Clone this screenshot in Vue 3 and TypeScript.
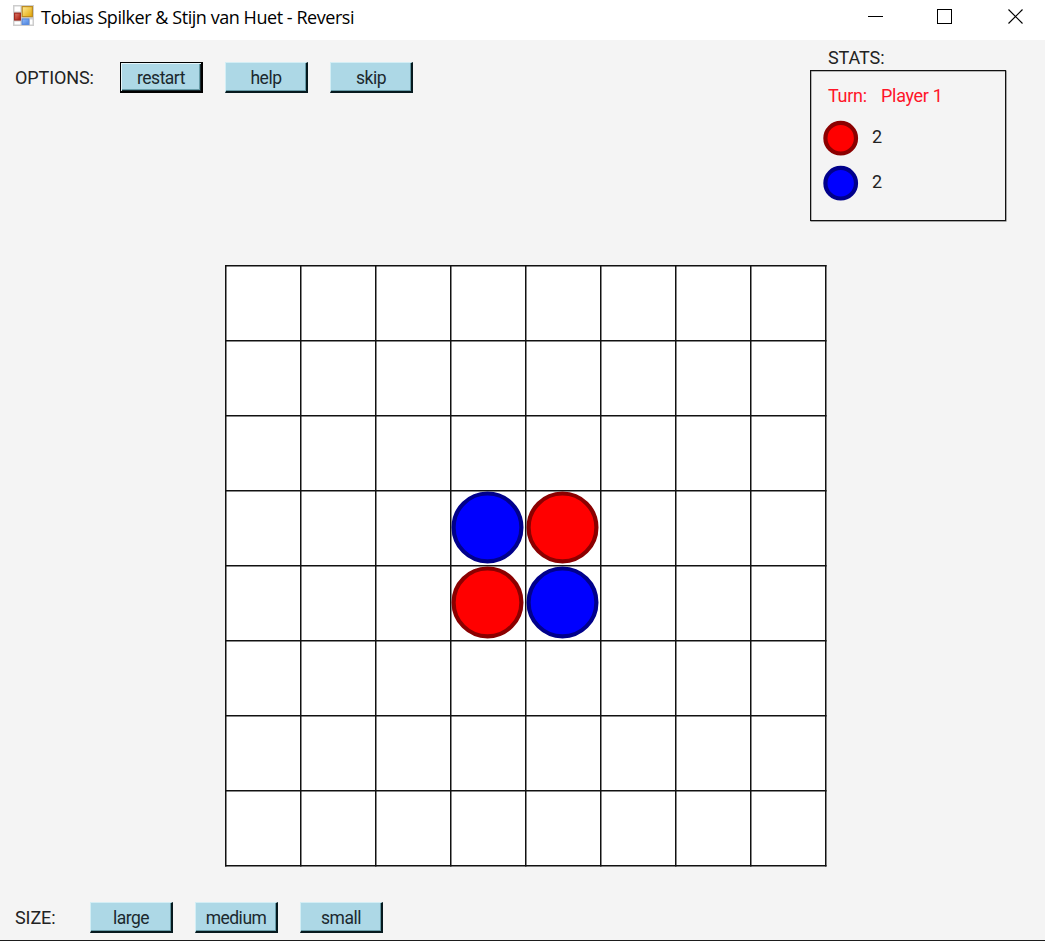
<script setup lang="ts">
import { ref } from 'vue'

type Player = 'red' | 'blue'
interface Disc { col: number; row: number; player: Player }

const CELL = 75
const size = ref(8)
const discs = ref<Disc[]>([
  { col: 3, row: 3, player: 'blue' },
  { col: 4, row: 3, player: 'red' },
  { col: 3, row: 4, player: 'red' },
  { col: 4, row: 4, player: 'blue' },
])
const players: Player[] = ['red', 'blue']
const count = (p: Player) => discs.value.filter(d => d.player === p).length
const options = ['restart', 'help', 'skip']
const sizes = ['large', 'medium', 'small']
</script>

<template>
  <div class="window">
    <header class="titlebar">
      <svg class="app-icon" width="21" height="21" viewBox="0 0 21 21">
        <defs>
          <linearGradient id="gold" x1="0" y1="0" x2="1" y2="1"><stop offset="0" stop-color="#ffec9a" /><stop offset="1" stop-color="#e2a400" /></linearGradient>
          <linearGradient id="ruby" x1="0" y1="0" x2="1" y2="1"><stop offset="0" stop-color="#e08070" /><stop offset="1" stop-color="#a81408" /></linearGradient>
          <linearGradient id="azure" x1="0" y1="0" x2="1" y2="1"><stop offset="0" stop-color="#91bbfa" /><stop offset="1" stop-color="#4c83df" /></linearGradient>
        </defs>
        <rect width="21" height="21" fill="#cdcdcd" />
        <rect x="1.5" y="1.5" width="6" height="5" fill="#fff" />
        <rect x="1.5" y="16.5" width="6" height="3" fill="#fff" />
        <rect x="17" y="14.5" width="2.5" height="5" fill="#fff" />
        <rect x="9.2" y="1.6" width="10.2" height="10" fill="url(#gold)" stroke="#bd8b20" stroke-width="1.2" />
        <rect x="1.6" y="8.2" width="5.8" height="6.8" fill="url(#ruby)" stroke="#a12a20" stroke-width="1.2" />
        <rect x="9.2" y="14" width="6.6" height="5.4" fill="url(#azure)" stroke="#5c8cdd" stroke-width="1.2" />
      </svg>
      <span class="title">Tobias Spilker &amp; Stijn van Huet - Reversi</span>
      <svg class="controls" width="157" height="17" viewBox="0 0 157 17" fill="none" stroke="#000">
        <path d="M0 8.5h15M69.5 1.5h14v14h-14z" shape-rendering="crispEdges" />
        <path d="M140.5 1.5l14 14M154.5 1.5l-14 14" stroke-width="1.15" />
      </svg>
    </header>

    <section class="top">
      <div class="toolbar">
        <span class="label options">OPTIONS:</span>
        <button v-for="(o, i) in options" :key="o" :class="{ focused: i === 0 }"><span>{{ o }}</span></button>
      </div>
      <div class="stats">
        <div class="label heading">STATS:</div>
        <div class="panel">
          <div class="turn"><span class="t1">Turn:</span><span class="t2">Player 1</span></div>
          <div v-for="p in players" :key="p" class="score">
            <svg width="36" height="36" viewBox="0 0 36 36">
              <circle cx="17.7" cy="18.2" r="15.3" :class="['disc', p]" />
            </svg>
            <span>{{ count(p) }}</span>
          </div>
        </div>
      </div>
    </section>

    <svg class="board" width="602" height="602" viewBox="0 0 602 602">
      <rect x="0" y="0" width="601" height="601" fill="#fff" />
      <g stroke="#111" stroke-width="1.5">
        <template v-for="n in size + 1" :key="n">
          <line :x1="(n - 1) * CELL + 0.75" y1="0" :x2="(n - 1) * CELL + 0.75" y2="601.5" />
          <line x1="0" :y1="(n - 1) * CELL + 0.75" x2="601.5" :y2="(n - 1) * CELL + 0.75" />
        </template>
      </g>
      <circle
        v-for="d in discs" :key="`${d.col}-${d.row}`"
        :cx="d.col * CELL + 37.5" :cy="d.row * CELL + 37.4" r="33.9"
        :class="['disc', d.player]"
      />
    </svg>

    <footer class="toolbar sizes">
      <span class="label size">SIZE:</span>
      <button v-for="s in sizes" :key="s"><span>{{ s }}</span></button>
    </footer>
  </div>
</template>

<style>
body { margin: 0; overflow: hidden; }
</style>

<style scoped>
.window {
  box-sizing: border-box;
  width: 1045px;
  height: 941px;
  display: flex;
  flex-direction: column;
  background: #f4f4f4;
  border-bottom: 1px solid #1d1d1d;
  font: 18px/22px Roboto, "Liberation Sans", sans-serif;
  color: #222;
}
.titlebar {
  box-sizing: border-box;
  flex: none;
  height: 40px;
  display: flex;
  align-items: flex-start;
  padding: 5px 20px 0 13px;
  background: #fff;
}
.title {
  margin-left: 7px;
  font: 18px/25px "Open Sans", "Noto Sans", sans-serif;
  letter-spacing: -0.45px;
  color: #000;
  white-space: nowrap;
}
.controls { margin: 3px 0 0 auto; }
.top {
  flex: none;
  height: 225px;
  display: flex;
  justify-content: space-between;
  align-items: flex-start;
  padding: 0 38px 0 15px;
}
.toolbar { display: flex; align-items: center; padding-top: 22px; }
.label { letter-spacing: -0.1px; white-space: nowrap; }
.options { width: 105px; }
.size { width: 75px; }
button {
  box-sizing: border-box;
  width: 83px;
  height: 31px;
  margin: 0 22px 0 0;
  padding: 2px 0 0;
  border: 2px solid;
  border-color: #d3eef5 #06191e #06191e #d3eef5;
  border-width: 1px 2px 2px 1px;
  box-shadow: inset -1px -1px 0 #679ca8;
  background: #add8e6;
  font: inherit;
  font-size: 17.5px;
  letter-spacing: -0.5px;
  color: #1b292e;
}
button.focused {
  border-color: #000;
  border-width: 1px 2px 2px 1px;
  box-shadow: inset 1px 1px 0 #e6f6fa, inset -1px -1px 0 #16292e, inset -2px -2px 0 #679ca8;
}
.stats { width: 197px; padding-top: 7px; }
.heading { margin-left: 18px; }
.panel {
  box-sizing: border-box;
  width: 196px;
  height: 151px;
  margin-top: 1px;
  border: 1px solid #111;
  box-shadow: 0.5px 0.5px 0 #555, inset 0.5px 0.5px 0 #777;
  padding: 14px 0 0 12px;
}
.turn { display: flex; height: 22px; margin-left: 5px; letter-spacing: -0.3px; color: #ff1528; }
.t1 { width: 53px; }
.score { display: flex; align-items: center; height: 36px; margin-top: 13px; gap: 13px; }
.score + .score { margin-top: 9px; }
.score span { position: relative; top: -1px; }
.board { flex: none; margin-left: 225px; }
.disc { stroke-width: 4.2; }
.disc.red { fill: #f00; stroke: #8b0000; }
.disc.blue { fill: #00f; stroke: #00008b; }
.sizes { padding: 35px 0 0 15px; }
</style>
